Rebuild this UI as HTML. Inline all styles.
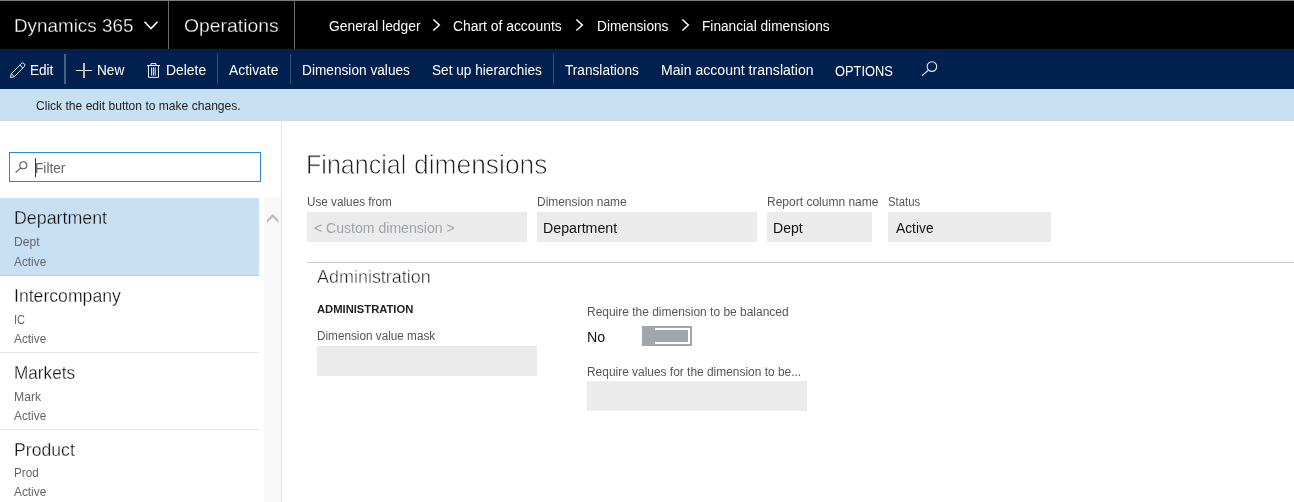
<!DOCTYPE html>
<html lang="en"><head><meta charset="utf-8"><title>Financial dimensions</title>
<style>
html,body{margin:0;padding:0;background:#fff;}
body{width:1294px;height:502px;overflow:hidden;font-family:"Liberation Sans",sans-serif;}
#app{will-change:transform;position:relative;width:1294px;height:502px;overflow:hidden;background:#fff;}
.t{position:absolute;white-space:nowrap;line-height:1;transform-origin:0 0;display:block;}
.b{position:absolute;display:block;}
svg{position:absolute;overflow:visible;}

</style></head>
<body>
<div id="app">
<!-- top black bar -->
<div class="b" style="left:0;top:0;width:1294px;height:49px;background:#000"></div>
<div class="b" style="left:0;top:0;width:1294px;height:1px;background:#7c7c7c"></div>
<div class="b" style="left:168px;top:1px;width:1px;height:48px;background:#6c6c6c"></div>
<div class="b" style="left:294px;top:1px;width:1px;height:48px;background:#6c6c6c"></div>
<!-- blue bar -->
<div class="b" style="left:0;top:49px;width:1294px;height:40px;background:#002050"></div>
<div class="b" style="left:64px;top:54px;width:2px;height:30px;background:#4f5f80"></div>
<div class="b" style="left:217px;top:54px;width:1px;height:30px;background:#3b4d74"></div>
<div class="b" style="left:290px;top:54px;width:1px;height:30px;background:#3b4d74"></div>
<div class="b" style="left:553px;top:54px;width:1px;height:30px;background:#3b4d74"></div>
<!-- info bar -->
<div class="b" style="left:0;top:89px;width:1294px;height:31px;background:#c7e0f4"></div>
<div class="b" style="left:0;top:120px;width:1294px;height:1px;background:#d8d8d8"></div>
<!-- left pane -->
<div class="b" style="left:281px;top:121px;width:1px;height:381px;background:#e6e6e6"></div>
<div class="b" style="left:264px;top:197px;width:17px;height:305px;background:#f8f8f8"></div>
<div class="b" style="left:9px;top:152px;width:250px;height:28px;border:1px solid #2b88d8;background:#fff"></div>
<div class="b" style="left:35px;top:158px;width:1px;height:19px;background:#333"></div>
<div class="b" style="left:0;top:198px;width:259px;height:77px;background:#c7e0f4"></div>
<div class="b" style="left:0;top:275px;width:259px;height:1px;background:#c8c8c8"></div>
<div class="b" style="left:0;top:352px;width:259px;height:1px;background:#e4e4e4"></div>
<div class="b" style="left:0;top:429px;width:259px;height:1px;background:#e4e4e4"></div>
<!-- content fields -->
<div class="b" style="left:307px;top:212px;width:220px;height:30px;background:#ebebeb"></div>
<div class="b" style="left:537px;top:212px;width:220px;height:30px;background:#ebebeb"></div>
<div class="b" style="left:767px;top:212px;width:105px;height:30px;background:#ebebeb"></div>
<div class="b" style="left:888px;top:212px;width:163px;height:30px;background:#ebebeb"></div>
<div class="b" style="left:307px;top:262px;width:987px;height:1px;background:#cfcfcf"></div>
<div class="b" style="left:317px;top:346px;width:220px;height:30px;background:#ebebeb"></div>
<div class="b" style="left:587px;top:381px;width:220px;height:30px;background:#ebebeb"></div>
<!-- toggle -->
<div class="b" style="left:642px;top:326px;width:50px;height:20px;background:#a2a5a9"></div>
<div class="b" style="left:655px;top:328px;width:33px;height:12px;border:2px solid #fff;border-left:none"></div>
<!-- icons -->
<svg style="left:144px;top:21px" width="14" height="9" viewBox="0 0 14 9"><path d="M0.5 0.8 L7 7.6 L13.5 0.8" fill="none" stroke="#fff" stroke-width="1.5"/></svg>
<svg style="left:432px;top:19px" width="9" height="12" viewBox="0 0 9 12"><path d="M1.4 0.5 L7.3 6 L1.4 11.5" fill="none" stroke="#fff" stroke-width="1.5"/></svg>
<svg style="left:575px;top:19px" width="9" height="12" viewBox="0 0 9 12"><path d="M1.4 0.5 L7.3 6 L1.4 11.5" fill="none" stroke="#fff" stroke-width="1.5"/></svg>
<svg style="left:681px;top:19px" width="9" height="12" viewBox="0 0 9 12"><path d="M1.4 0.5 L7.3 6 L1.4 11.5" fill="none" stroke="#fff" stroke-width="1.5"/></svg>
<!-- pencil -->
<svg style="left:10px;top:63px" width="15" height="15" viewBox="0 0 15 15"><path d="M0.4 14.6 L1.3 10.7 L11.4 0.5 A2.1 2.1 0 0 1 14.4 3.4 L4.3 13.7 Z M1.3 10.7 L4.3 13.7 M9.6 2.3 Q11.8 2.6 12.6 5.2" fill="none" stroke="#e4ebf6" stroke-width="1" stroke-linejoin="round"/></svg>
<!-- plus -->
<div class="b" style="left:76px;top:70px;width:16px;height:1px;background:#f2f2f2"></div>
<div class="b" style="left:83px;top:63px;width:2px;height:15px;background:#bdbdbd"></div>
<!-- trash -->
<svg style="left:147px;top:63px" width="13" height="15" viewBox="0 0 13 15"><path d="M0 2.5 H13 M4 2.5 V0.6 H9 V2.5 M1.5 2.5 V14.4 H11.5 V2.5 M4.6 4.4 V12.6 M6.4 4.4 V12.6 M8.2 4.4 V12.6" fill="none" stroke="#f0f0f0" stroke-width="1"/></svg>
<!-- search (bar) -->
<svg style="left:921px;top:61px" width="17" height="15" viewBox="0 0 17 15"><circle cx="10.9" cy="5.6" r="4.8" fill="none" stroke="#e6ebf3" stroke-width="1.1"/><path d="M7.4 9.1 L1 14.7" stroke="#e6ebf3" stroke-width="1.2"/></svg>
<!-- search (filter) -->
<svg style="left:14.5px;top:161px" width="13" height="12" viewBox="0 0 13 12"><circle cx="8.3" cy="4.2" r="3.5" fill="none" stroke="#555" stroke-width="1.1"/><path d="M5.8 6.8 L0.6 11.6" stroke="#555" stroke-width="1.1"/></svg>
<!-- scroll up chevron -->
<svg style="left:266.9px;top:214px" width="12" height="9" viewBox="0 0 12 9"><polygon points="0,5.8 5.7,0 11.4,5.8 11.4,9 5.7,3.3 0,9" fill="#bebebe"/></svg>

<span class="t" style="left:13.53px;top:16.02px;font-size:19px;-webkit-text-stroke:0.3px #000000;color:#ffffff;transform:scaleX(0.9916)">Dynamics 365</span>
<span class="t" style="left:184.34px;top:16.02px;font-size:19px;-webkit-text-stroke:0.3px #000000;color:#ffffff;transform:scaleX(1.0190)">Operations</span>
<span class="t" style="left:328.91px;top:18.85px;font-size:14px;color:#ffffff;transform:scaleX(0.9884)">General ledger</span>
<span class="t" style="left:452.59px;top:18.85px;font-size:14px;color:#ffffff;transform:scaleX(0.9912)">Chart of accounts</span>
<span class="t" style="left:596.68px;top:18.85px;font-size:14px;color:#ffffff;transform:scaleX(0.9771)">Dimensions</span>
<span class="t" style="left:701.68px;top:18.85px;font-size:14px;color:#ffffff;transform:scaleX(0.9766)">Financial dimensions</span>
<span class="t" style="left:30.39px;top:63.45px;font-size:14px;color:#ffffff;transform:scaleX(0.9686)">Edit</span>
<span class="t" style="left:96.89px;top:63.45px;font-size:14px;color:#ffffff;transform:scaleX(0.9751)">New</span>
<span class="t" style="left:166.16px;top:63.45px;font-size:14px;color:#ffffff;transform:scaleX(0.9927)">Delete</span>
<span class="t" style="left:228.59px;top:63.45px;font-size:14px;color:#ffffff;transform:scaleX(0.9928)">Activate</span>
<span class="t" style="left:301.98px;top:63.45px;font-size:14px;color:#ffffff;transform:scaleX(0.9768)">Dimension values</span>
<span class="t" style="left:431.71px;top:63.45px;font-size:14px;color:#ffffff;transform:scaleX(0.9735)">Set up hierarchies</span>
<span class="t" style="left:565.05px;top:63.45px;font-size:14px;color:#ffffff;transform:scaleX(0.9745)">Translations</span>
<span class="t" style="left:660.77px;top:63.45px;font-size:14px;color:#ffffff;transform:scaleX(1.0052)">Main account translation</span>
<span class="t" style="left:835.49px;top:64.05px;font-size:14px;color:#ffffff;transform:scaleX(0.9197)">OPTIONS</span>
<span class="t" style="left:36.21px;top:99.30px;font-size:13px;color:#1c1c1c;transform:scaleX(0.9286)">Click the edit button to make changes.</span>
<span class="t" style="left:35.28px;top:161.15px;font-size:14px;color:#666666;transform:scaleX(0.9760)">Filter</span>
<span class="t" style="left:13.92px;top:209.06px;font-size:18px;-webkit-text-stroke:0.3px #c7e0f4;color:#0c0c0c;transform:scaleX(0.9887)">Department</span>
<span class="t" style="left:14.40px;top:235.00px;font-size:13px;color:#666666;transform:scaleX(0.9300)">Dept</span>
<span class="t" style="left:14.21px;top:255.00px;font-size:13px;color:#666666;transform:scaleX(0.9107)">Active</span>
<span class="t" style="left:14.02px;top:287.06px;font-size:18px;-webkit-text-stroke:0.3px #ffffff;color:#0c0c0c;transform:scaleX(0.9795)">Intercompany</span>
<span class="t" style="left:14.15px;top:313.00px;font-size:13px;color:#666666;transform:scaleX(0.8477)">IC</span>
<span class="t" style="left:14.21px;top:332.00px;font-size:13px;color:#666666;transform:scaleX(0.9107)">Active</span>
<span class="t" style="left:13.98px;top:364.06px;font-size:18px;-webkit-text-stroke:0.3px #ffffff;color:#0c0c0c;transform:scaleX(0.9540)">Markets</span>
<span class="t" style="left:13.98px;top:390.00px;font-size:13px;color:#666666;transform:scaleX(0.9370)">Mark</span>
<span class="t" style="left:14.21px;top:409.00px;font-size:13px;color:#666666;transform:scaleX(0.9107)">Active</span>
<span class="t" style="left:13.89px;top:441.06px;font-size:18px;-webkit-text-stroke:0.3px #ffffff;color:#0c0c0c;transform:scaleX(0.9799)">Product</span>
<span class="t" style="left:14.44px;top:466.00px;font-size:13px;color:#666666;transform:scaleX(0.8988)">Prod</span>
<span class="t" style="left:14.21px;top:485.00px;font-size:13px;color:#666666;transform:scaleX(0.9107)">Active</span>
<span class="t" style="left:306.45px;top:149.87px;font-size:28.5px;-webkit-text-stroke:0.8px #ffffff;color:#1e1e1e;transform:scaleX(0.8799)">Financial</span>
<span class="t" style="left:414.01px;top:149.87px;font-size:28.5px;-webkit-text-stroke:0.8px #ffffff;color:#1e1e1e;transform:scaleX(0.9258)">dimensions</span>
<span class="t" style="left:306.70px;top:195.62px;font-size:12.5px;color:#555555;transform:scaleX(0.9384)">Use values from</span>
<span class="t" style="left:537.49px;top:195.62px;font-size:12.5px;color:#555555;transform:scaleX(0.9555)">Dimension name</span>
<span class="t" style="left:767.29px;top:195.62px;font-size:12.5px;color:#555555;transform:scaleX(0.9607)">Report column name</span>
<span class="t" style="left:888.37px;top:195.62px;font-size:12.5px;color:#555555;transform:scaleX(0.9104)">Status</span>
<span class="t" style="left:314.39px;top:221.25px;font-size:14px;color:#a0a4a8;transform:scaleX(1.0040)">&lt; Custom dimension &gt;</span>
<span class="t" style="left:543.24px;top:220.95px;font-size:14px;color:#111111;transform:scaleX(1.0136)">Department</span>
<span class="t" style="left:773.25px;top:220.95px;font-size:14px;color:#111111;transform:scaleX(1.0039)">Dept</span>
<span class="t" style="left:895.79px;top:220.95px;font-size:14px;color:#111111;transform:scaleX(0.9848)">Active</span>
<span class="t" style="left:316.72px;top:269.09px;font-size:17.5px;-webkit-text-stroke:0.4px #ffffff;color:#1e1e1e;transform:scaleX(1.0260)">Administration</span>
<span class="t" style="left:316.83px;top:304.27px;font-size:11.5px;font-weight:700;color:#222222;transform:scaleX(0.9742)">ADMINISTRATION</span>
<span class="t" style="left:317.21px;top:329.52px;font-size:12.5px;color:#555555;transform:scaleX(0.9399)">Dimension value mask</span>
<span class="t" style="left:587.09px;top:305.72px;font-size:12.5px;color:#555555;transform:scaleX(0.9576)">Require the dimension to be balanced</span>
<span class="t" style="left:587.33px;top:330.45px;font-size:14px;color:#111111;transform:scaleX(1.0192)">No</span>
<span class="t" style="left:587.10px;top:365.62px;font-size:12.5px;color:#555555;transform:scaleX(0.9541)">Require values for the dimension to be...</span>
</div>
</body></html>
